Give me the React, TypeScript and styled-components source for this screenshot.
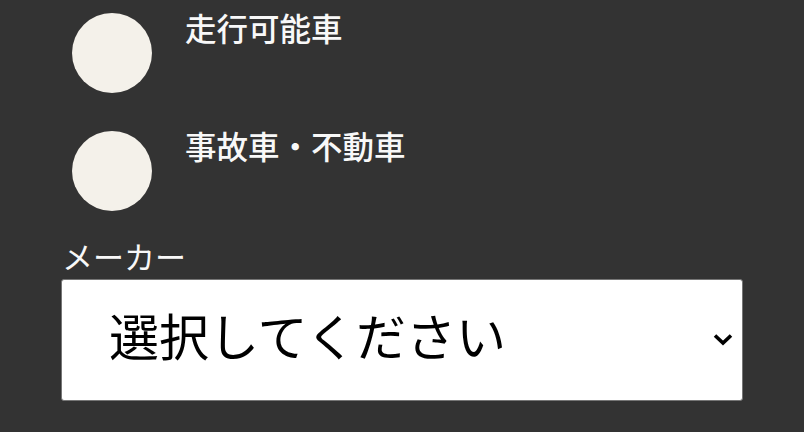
import React, { useState } from "react";
import styled, { createGlobalStyle } from "styled-components";

const GlobalStyle = createGlobalStyle`
  html, body {
    margin: 0;
    padding: 0;
    background-color: #333333;
  }
  body {
    font-family: "Noto Sans CJK JP", "Noto Sans", sans-serif;
  }
`;

const Form = styled.form`
  width: 100%;
  padding: 0 61px;
  box-sizing: border-box;
`;

const RadioList = styled.div`
  display: flex;
  flex-direction: column;
  gap: 25px;
  padding-left: 11px;
`;

const RadioRow = styled.label`
  display: flex;
  align-items: flex-start;
  gap: 33px;
  cursor: pointer;
`;

const Circle = styled.span<{ $checked: boolean }>`
  flex: none;
  width: 80px;
  height: 80px;
  margin-top: 13px;
  border-radius: 50%;
  background-color: ${({ $checked }) => ($checked ? "#d8c9a4" : "#f4f1ea")};
`;

const HiddenInput = styled.input`
  display: none;
`;

const RadioText = styled.span`
  margin-top: 4px;
  color: #f8f8f8;
  font-size: 31.5px;
  font-weight: 500;
`;

const FieldLabel = styled.label`
  display: block;
  margin-top: 21px;
  padding-left: 1px;
  color: #f8f8f8;
  font-size: 31px;
  line-height: 47px;
  height: 47px;
  overflow: hidden;
`;

const SelectWrap = styled.div`
  position: relative;
  width: 100%;
`;

const Select = styled.select`
  appearance: none;
  display: block;
  width: 100%;
  height: 122px;
  box-sizing: border-box;
  padding: 0 60px 12px 47px;
  background-color: #ffffff;
  border: 1px solid #767676;
  border-radius: 3px;
  color: #000000;
  font-family: "Noto Sans CJK JP", "Noto Sans", sans-serif;
  font-size: 50px;
  outline: none;
`;

const Chevron = styled.svg`
  position: absolute;
  right: 10px;
  top: 54px;
  width: 20px;
  height: 13px;
  pointer-events: none;
`;

const conditions = ["走行可能車", "事故車・不動車"];

export default function App() {
  const [condition, setCondition] = useState("");
  const [maker, setMaker] = useState("");

  return (
    <>
      <GlobalStyle />
      <Form onSubmit={(e) => e.preventDefault()}>
        <RadioList>
          {conditions.map((c) => (
            <RadioRow key={c}>
              <HiddenInput
                type="radio"
                name="condition"
                value={c}
                checked={condition === c}
                onChange={() => setCondition(c)}
              />
              <Circle $checked={condition === c} />
              <RadioText>{c}</RadioText>
            </RadioRow>
          ))}
        </RadioList>
        <FieldLabel htmlFor="maker">メーカー</FieldLabel>
        <SelectWrap>
          <Select id="maker" value={maker} onChange={(e) => setMaker(e.target.value)}>
            <option value="">選択してください</option>
            <option value="toyota">トヨタ</option>
            <option value="nissan">日産</option>
            <option value="honda">ホンダ</option>
          </Select>
          <Chevron viewBox="0 0 20 13">
            <path d="M2 2.5 L10 10 L18 2.5" fill="none" stroke="#000" strokeWidth="3.6" />
          </Chevron>
        </SelectWrap>
      </Form>
    </>
  );
}
